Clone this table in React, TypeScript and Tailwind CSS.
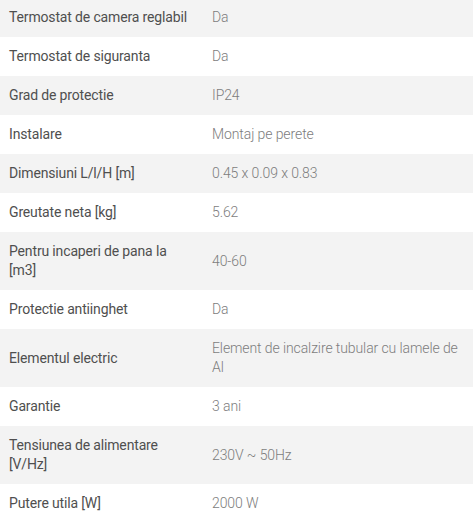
import React from 'react';

const specs: [string, string][] = [
  ['Termostat de camera reglabil', 'Da'],
  ['Termostat de siguranta', 'Da'],
  ['Grad de protectie', 'IP24'],
  ['Instalare', 'Montaj pe perete'],
  ['Dimensiuni L/l/H [m]', '0.45 x 0.09 x 0.83'],
  ['Greutate neta [kg]', '5.62'],
  ['Pentru incaperi de pana la [m3]', '40-60'],
  ['Protectie antiinghet', 'Da'],
  ['Elementul electric', 'Element de incalzire tubular cu lamele de Al'],
  ['Garantie', '3 ani'],
  ['Tensiunea de alimentare [V/Hz]', '230V ~ 50Hz'],
  ['Putere utila [W]', '2000 W'],
];

function App() {
  return (
    <div className="w-[473px] h-[520px] overflow-hidden bg-white font-['Roboto',sans-serif] text-[14px] leading-[19px]">
      <div className="-mt-[2px] flex flex-col">
        {specs.map(([label, value], i) => (
          <div key={label} className={`flex flex-row items-center ${i % 2 === 0 ? 'bg-[#f3f3f3]' : 'bg-white'}`}>
            <div className="w-[202px] shrink-0 py-[10px] pl-[9px] pr-[10px] tracking-[-0.15px] text-[#4f4f4f]">{label}</div>
            <div className="flex-1 py-[10px] pl-[10px] pr-[10px] font-light tracking-[-0.1px] text-[#7d7d7d]">{value}</div>
          </div>
        ))}
      </div>
    </div>
  );
}

export default App;
